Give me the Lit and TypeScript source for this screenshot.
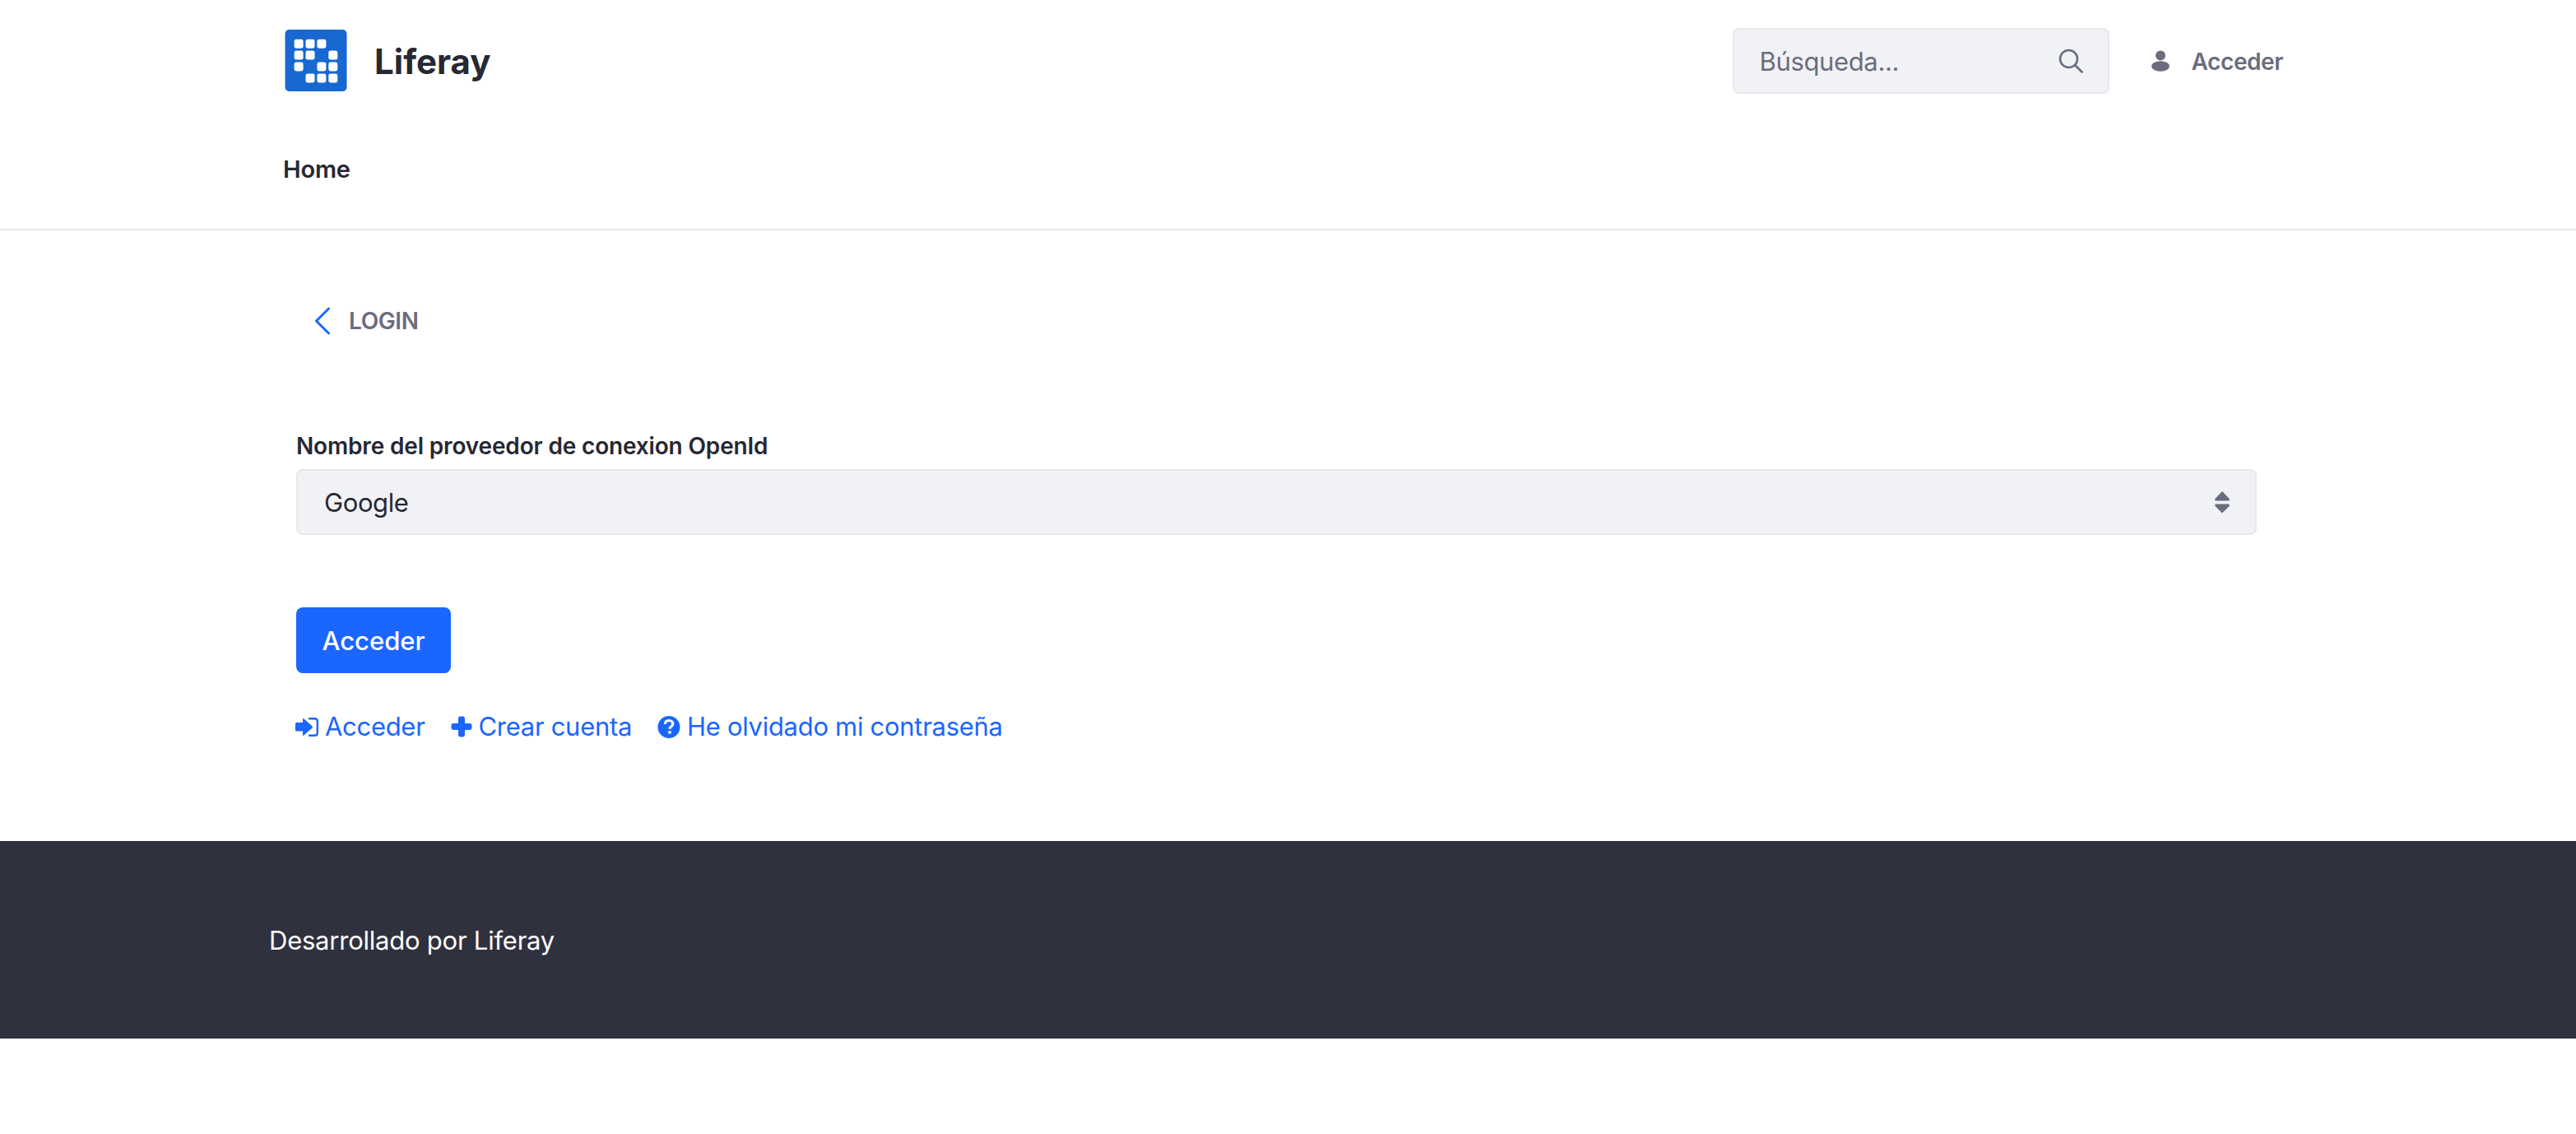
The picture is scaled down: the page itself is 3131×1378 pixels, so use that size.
import { LitElement, html, css, svg } from "lit";
import { customElement } from "lit/decorators.js";

const CELLS = [
  [0, 0], [1, 0], [2, 0],
  [0, 1], [1, 1], [3, 1],
  [0, 2], [2, 2], [3, 2],
  [1, 3], [2, 3], [3, 3],
];

@customElement("app-root")
export class AppRoot extends LitElement {
  static styles = css`
    :host {
      display: block;
      width: 100%;
      min-height: 1378px;
      background: #fff;
      font-family: Inter, "Noto Sans", sans-serif;
      color: #272833;
    }
    a { text-decoration: none; color: inherit; }
    .header { border-bottom: 2px solid #e7e7ed; height: 278px; box-sizing: content-box; }
    .top {
      display: flex;
      align-items: center;
      height: 148px;
      padding: 0 356px 0 346px;
    }
    .logo { width: 76px; height: 76px; display: block; margin-right: 34px; }
    .brand { font-size: 42px; font-weight: 700; line-height: 1; flex: 1; padding-top: 2px; margin-left: -1px; }
    .search {
      width: 458px;
      height: 80px;
      box-sizing: border-box;
      background: #f1f2f5;
      border: 2px solid #e7e7ed;
      border-radius: 8px;
      display: flex;
      align-items: center;
      justify-content: space-between;
      padding: 0 30px 0 31px;
      font-size: 31px;
      letter-spacing: -0.36px;
      color: #6b6c7e;
    }
    .search svg { width: 30px; height: 30px; display: block; }
    .user {
      display: flex;
      align-items: center;
      margin-left: 50px;
      font-size: 28px;
      font-weight: 600;
      letter-spacing: -0.4px;
      color: #6b6c7e;
      padding-top: 2px;
    }
    .user svg { width: 24px; height: 26px; display: block; margin-right: 26px; margin-top: -2px; }
    .nav {
      padding-left: 344px;
      font-size: 29px;
      font-weight: 600;
      letter-spacing: -0.2px;
      line-height: 34px;
      padding-top: 41px;
    }
    .main { padding: 90px 388px 0 360px; height: 742px; box-sizing: border-box; }
    .back {
      display: flex;
      align-items: center;
      height: 40px;
      padding-left: 22px;
      font-size: 28px;
      font-weight: 600;
      letter-spacing: -0.4px;
      color: #6b6c7e;
    }
    .back svg { width: 22px; height: 34px; display: block; margin-right: 20px; }
    .label {
      display: block;
      margin-top: 114px;
      font-size: 28px;
      font-weight: 600;
      letter-spacing: -0.16px;
      line-height: 36px;
    }
    .select {
      margin-top: 10px;
      height: 80px;
      box-sizing: border-box;
      background: #f1f2f5;
      border: 2px solid #e7e7ed;
      border-radius: 8px;
      display: flex;
      align-items: center;
      justify-content: space-between;
      padding: 0 31px 0 32px;
      font-size: 31px;
      letter-spacing: -0.4px;
    }
    .select svg { width: 18px; height: 28px; display: block; }
    .btn {
      margin-top: 88px;
      display: flex;
      align-items: center;
      justify-content: center;
      width: 188px;
      height: 80px;
      background: #1a66ff;
      border-radius: 8px;
      color: #fff;
      font-size: 31px;
      font-weight: 500;
    }
    .links {
      margin-top: 45px;
      margin-left: -1px;
      display: flex;
      gap: 31px;
      font-size: 31px;
      letter-spacing: -0.3px;
      line-height: 40px;
      color: #1a66ff;
    }
    .links a { display: flex; align-items: center; gap: 8px; }
    .links svg { height: 28px; width: 28px; display: block; }
    .links svg.plus { width: 26px; }
    .footer {
      height: 240px;
      background: #30313f;
      color: #fff;
      font-size: 31px;
      letter-spacing: -0.23px;
      display: flex;
      align-items: center;
      padding-left: 327px;
    }
  `;

  render() {
    return html`
      <header class="header">
        <div class="top">
          <svg class="logo" viewBox="0 0 76 76">
            <rect x="0.5" y="0" width="75" height="75" rx="5" fill="#1768d0" />
            ${CELLS.map(
              ([c, r]) =>
                svg`<rect x=${11.6 + c * 13.9} y=${11.7 + r * 13.9} width="11" height="11" rx="2.4" fill="#fff" />`
            )}
          </svg>
          <span class="brand">Liferay</span>
          <div class="search">
            <span>Búsqueda...</span>
            <svg viewBox="0 0 30 30" fill="none" stroke="#6b6c7e" stroke-width="2.6" stroke-linecap="round">
              <circle cx="12.5" cy="12.5" r="10.5" />
              <path d="M20.5 20.5 L28.5 28.5" />
            </svg>
          </div>
          <a class="user">
            <svg viewBox="0 0 24 26" fill="#6b6c7e">
              <circle cx="12" cy="6.5" r="6" />
              <ellipse cx="12" cy="19.5" rx="11" ry="6.2" />
            </svg>
            Acceder
          </a>
        </div>
        <nav class="nav"><a>Home</a></nav>
      </header>
      <main class="main">
        <a class="back">
          <svg viewBox="0 0 22 34" fill="none" stroke="#1a66ff" stroke-width="3" stroke-linecap="round" stroke-linejoin="round">
            <path d="M17.5 2 L2.5 17 L17.5 32" />
          </svg>
          LOGIN
        </a>
        <label class="label">Nombre del proveedor de conexion OpenId</label>
        <div class="select">
          <span>Google</span>
          <svg viewBox="0 0 18 28" fill="#6b6c7e">
            <path d="M9 1 L17.6 10 Q18.6 12.6 16 12.6 L2 12.6 Q-0.6 12.6 0.4 10 Z" />
            <path d="M9 27.6 L17.6 19 Q18.6 16.4 16 16.4 L2 16.4 Q-0.6 16.4 0.4 19 Z" />
          </svg>
        </div>
        <a class="btn">Acceder</a>
        <div class="links">
          <a>
            <svg viewBox="0 0 28 28" fill="#1a66ff">
              <path d="M1.5 9 H9 V5 Q9 3.6 10.4 4.4 L20.6 13.4 Q21.4 14.4 20.6 15.4 L10.4 24.6 Q9 25.4 9 24 V19.6 H1.5 Q0 19.6 0 18 V10.6 Q0 9 1.5 9 Z" />
              <path d="M17 4.2 H23.5 Q26.8 4.2 26.8 7.5 V21.5 Q26.8 24.8 23.5 24.8 H17" fill="none" stroke="#1a66ff" stroke-width="2.4" stroke-linecap="round" />
            </svg>
            Acceder
          </a>
          <a>
            <svg class="plus" viewBox="0 0 26 28" fill="#1a66ff">
              <path d="M9 4 Q9 1.6 11.4 1.6 H14.6 Q17 1.6 17 4 V10 H23 Q25.5 10 25.5 12.4 V15.6 Q25.5 18 23 18 H17 V24 Q17 26.4 14.6 26.4 H11.4 Q9 26.4 9 24 V18 H3 Q0.5 18 0.5 15.6 V12.4 Q0.5 10 3 10 H9 Z" />
            </svg>
            Crear cuenta
          </a>
          <a>
            <svg viewBox="0 0 28 28">
              <circle cx="14" cy="14.5" r="13.5" fill="#1a66ff" />
              <path d="M9.5 11 C9.5 8 11.5 6.5 14 6.5 C16.8 6.5 18.8 8.2 18.8 10.6 C18.8 13.8 15 13.8 15 16.8" fill="none" stroke="#fff" stroke-width="3.2" />
              <rect x="13.2" y="19.2" width="3.6" height="3.4" rx="0.6" fill="#fff" />
            </svg>
            He olvidado mi contraseña
          </a>
        </div>
      </main>
      <footer class="footer">Desarrollado por Liferay</footer>
    `;
  }
}
